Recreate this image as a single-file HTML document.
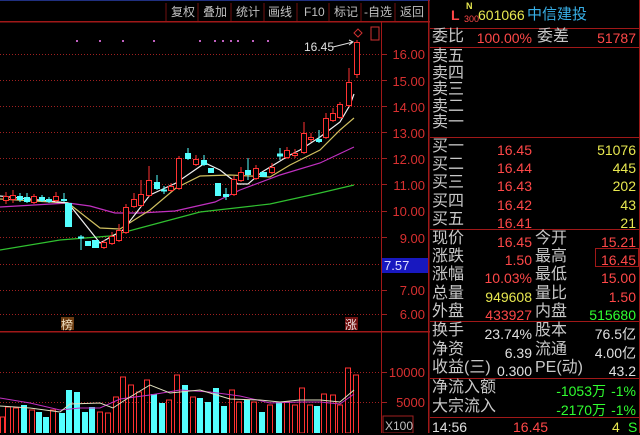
<!DOCTYPE html>
<html><head><meta charset="utf-8"><style>
body{margin:0;width:640px;height:433px;background:#000;overflow:hidden;position:relative;font-family:"Liberation Sans","Noto Sans CJK SC",sans-serif}
.t{position:absolute;white-space:nowrap;line-height:1}
.l{color:#c8c8c8;font-size:16px}
.r{color:#ff4848}.y{color:#e8e850}.g{color:#30ff30}.w{color:#e0e0e0}
.n{font-size:14px;text-align:right}
.hl{position:absolute;left:430px;width:210px;height:1px;background:#a01818}
</style></head><body>
<svg width="430" height="433" style="position:absolute;left:0;top:0" font-family="Liberation Sans, Noto Sans CJK SC, sans-serif">
<rect x="0" y="0" width="640" height="1" fill="#203080"/>
<g fill="#c0c0c0" font-size="12">
<text x="171" y="16">复权</text><text x="203" y="16">叠加</text><text x="236" y="16">统计</text><text x="268" y="16">画线</text><text x="304" y="16">F10</text><text x="334" y="16">标记</text><text x="364" y="16">-自选</text><text x="400" y="16">返回</text>
</g>
<g stroke="#701010"><path d="M166 3V21M198 3V21M231 3V21M264 3V21M297 3V21M329 3V21M361 3V21M395 3V21"/></g>
<rect x="0" y="21" width="430" height="1.5" fill="#a01818"/>
<g stroke="#a02020" stroke-dasharray="1,2">
<path d="M0 54.5H381M0 80.5H381M0 106.5H381M0 132.5H381M0 158.5H381M0 184.5H381M0 211.5H381M0 237.5H381M0 264.5H381M0 290.5H381M0 314.5H381M0 372.5H381M0 402.5H381"/>
</g>
<rect x="0" y="331" width="430" height="1.5" fill="#a01818"/>
<rect x="381" y="21" width="1" height="412" fill="#a01818"/>
<rect x="428" y="0" width="1.5" height="433" fill="#a01818"/>
<g stroke="#a02020"><path d="M382 54.5h5M382 80.5h5M382 106.5h5M382 132.5h5M382 158.5h5M382 184.5h5M382 211.5h5M382 237.5h5M382 290.5h5M382 314.5h5M382 372.5h5M382 402.5h5"/></g>
<g fill="#d83030" font-size="13" text-anchor="end">
<text x="425" y="59">16.00</text><text x="425" y="86">15.00</text><text x="425" y="112">14.00</text><text x="425" y="138">13.00</text><text x="425" y="164">12.00</text><text x="425" y="190">11.00</text><text x="425" y="216">10.00</text><text x="425" y="243">9.00</text><text x="425" y="295">7.00</text><text x="425" y="319">6.00</text>
<text x="425" y="377">10000</text><text x="425" y="407">5000</text>
</g>
<rect x="382" y="258" width="46" height="15" fill="#1818c0"/>
<text x="384" y="270" fill="#e0e0ff" font-size="13">7.57</text>
<rect x="383" y="416" width="30" height="17" fill="none" stroke="#a02020"/>
<text x="385" y="430" fill="#c0c0c0" font-size="12">X100</text>
<g fill="#c060c0"><rect x="76" y="40" width="2" height="2"/><rect x="99" y="40" width="2" height="2"/><rect x="122" y="40" width="2" height="2"/><rect x="153" y="40" width="2" height="2"/><rect x="199" y="40" width="2" height="2"/><rect x="214" y="40" width="2" height="2"/><rect x="222" y="40" width="2" height="2"/><rect x="230" y="40" width="2" height="2"/><rect x="237" y="40" width="2" height="2"/><rect x="252" y="40" width="2" height="2"/><rect x="267" y="40" width="2" height="2"/></g>
<path d="M358 29l4 4-4 4-4-4z" fill="none" stroke="#d03030"/>
<rect x="371" y="27" width="8" height="13" fill="none" stroke="#d03030"/>
<text x="304" y="51" fill="#e0e0e0" font-size="12">16.45</text>
<path d="M333 47L353 42M349 40l4 2-4 3" stroke="#e0e0e0" fill="none"/>
<g fill="none" stroke-width="1.2">
<polyline stroke="#30c030" points="0,250 60,240 110,236 140,228 200,212 270,204 320,193 354,185"/>
<polyline stroke="#c030c0" points="0,207 68,203 90,206 115,213 140,213 175,211 215,202 240,190 280,175 320,163 354,147"/>
<polyline stroke="#d0c060" points="0,199 68,203 100,228 120,229 150,210 176,188 200,176 230,175 270,177 290,165 320,150 340,130 354,118"/>
<polyline stroke="#f0f0f0" points="0,196 68,203 100,243 123,230 150,195 176,183 205,163 220,170 238,184 248,184 262,172 290,155 300,150 320,137 340,122 350,105 354,94"/>
</g>
<g stroke-width="1">
<g stroke="#ff3232" fill="#000">
<path d="M6 192V204M13 190V203M34 194V204M56 192V202M104 240V249M112 232V245M119 224V242M126 204V234M134 193V208M141 180V207M149 166V197M171 183V192M179 156V190M196 155V166M234 176V196M241 167V182M256 165V180M272 163V174M287 147V159M295 149V158M304 122V154M311 133V142M326 113V139M333 108V122M340 102V119M349 68V107M357 40V78" />
<rect x="3.5" y="196.5" width="5" height="4"/><rect x="10.5" y="195.5" width="5" height="4"/><rect x="31.5" y="196.5" width="5" height="6"/><rect x="53.5" y="196.5" width="5" height="4"/>
<rect x="101.5" y="242.5" width="5" height="5"/><rect x="109.5" y="236.5" width="5" height="7"/><rect x="116.5" y="230.5" width="5" height="10"/><rect x="123.5" y="207.5" width="5" height="25"/><rect x="131.5" y="199.5" width="5" height="7"/><rect x="138.5" y="194.5" width="5" height="11"/><rect x="146.5" y="180.5" width="5" height="15"/><rect x="168.5" y="186.5" width="5" height="4"/><rect x="176.5" y="158.5" width="5" height="30"/><rect x="193.5" y="159.5" width="5" height="5"/><rect x="231.5" y="179.5" width="5" height="15"/><rect x="238.5" y="172.5" width="5" height="8"/><rect x="253.5" y="168.5" width="5" height="10"/><rect x="269.5" y="167.5" width="5" height="5"/><rect x="284.5" y="150.5" width="5" height="7"/><rect x="292.5" y="153.5" width="5" height="2"/><rect x="301.5" y="133.5" width="5" height="19"/><rect x="308.5" y="137.5" width="5" height="2"/><rect x="323.5" y="118.5" width="5" height="19"/><rect x="330.5" y="113.5" width="5" height="7"/><rect x="337.5" y="104.5" width="5" height="13"/><rect x="346.5" y="82.5" width="5" height="23"/><rect x="354.5" y="42.5" width="5" height="32"/>
</g>
<g stroke="#54ffff" fill="#54ffff">
<path d="M20 193V202M27 193V203M42 195V202M49 197V203M64 193V202M81 235V250M157 175V190M164 186V194M188 148V160M204 155V166M226 188V200M248 158V180M280 148V160M319 130V143"/>
<rect x="17.5" y="196.5" width="5" height="3"/><rect x="24.5" y="197.5" width="5" height="4"/><rect x="39.5" y="197.5" width="5" height="3"/><rect x="46.5" y="199.5" width="5" height="2"/><rect x="61.5" y="199.5" width="5" height="1"/>
<rect x="65.5" y="203.5" width="6" height="23"/><rect x="78.5" y="237" width="5" height="1"/><rect x="85.5" y="241.5" width="5" height="4"/><rect x="92.5" y="240.5" width="6" height="7"/><rect x="154.5" y="182.5" width="5" height="6"/><rect x="161.5" y="190" width="5" height="1"/><rect x="185.5" y="153.5" width="5" height="5"/><rect x="201.5" y="160.5" width="5" height="4"/><rect x="208.5" y="168.5" width="5" height="4"/><rect x="215.5" y="183.5" width="5" height="12"/><rect x="223.5" y="194.5" width="5" height="2"/><rect x="245.5" y="170.5" width="5" height="4"/><rect x="260.5" y="172.5" width="6" height="4"/><rect x="277.5" y="154" width="5" height="2"/><rect x="316.5" y="139.5" width="5" height="2"/>
</g>
</g>
<rect x="61" y="317" width="13" height="13" fill="#6a3a10"/><text x="61" y="329" fill="#f0e0c0" font-size="12">榜</text>
<rect x="345" y="317" width="13" height="13" fill="#701010"/><text x="345" y="329" fill="#f0e0e0" font-size="12">涨</text>
<g stroke="#ff3232" fill="none">
<rect x="0.5" y="417" width="4" height="20"/><rect x="5.5" y="407" width="5" height="30"/><rect x="13.5" y="408" width="5" height="30"/><rect x="29.5" y="410" width="5" height="30"/><rect x="50.5" y="410" width="5" height="30"/><rect x="97.5" y="412" width="5" height="30"/><rect x="105.5" y="413" width="5" height="30"/><rect x="113.5" y="397" width="5" height="40"/><rect x="120.5" y="377" width="5" height="60"/><rect x="128.5" y="385" width="5" height="50"/><rect x="136.5" y="392" width="5" height="45"/><rect x="144.5" y="380" width="5" height="55"/><rect x="166.5" y="400" width="5" height="35"/><rect x="174.5" y="375" width="5" height="60"/><rect x="190.5" y="397" width="5" height="40"/><rect x="229.5" y="390" width="5" height="45"/><rect x="236.5" y="402" width="5" height="35"/><rect x="251.5" y="402" width="5" height="35"/><rect x="267.5" y="405" width="5" height="30"/><rect x="284.5" y="402" width="5" height="35"/><rect x="292.5" y="405" width="5" height="30"/><rect x="299.5" y="388" width="5" height="45"/><rect x="307.5" y="405" width="5" height="30"/><rect x="321.5" y="394" width="5" height="40"/><rect x="330.5" y="395" width="5" height="40"/><rect x="337.5" y="405" width="5" height="30"/><rect x="345.5" y="368" width="5" height="65"/><rect x="353.5" y="375" width="5" height="60"/>
</g>
<g fill="#54ffff">
<rect x="21" y="405" width="6" height="30"/><rect x="36" y="412" width="6" height="25"/><rect x="43" y="417" width="6" height="20"/><rect x="59" y="413" width="6" height="25"/><rect x="66" y="390" width="6" height="45"/><rect x="74" y="392" width="6" height="45"/><rect x="82" y="412" width="6" height="25"/><rect x="89" y="407" width="6" height="30"/><rect x="151" y="394" width="6" height="40"/><rect x="159" y="403" width="6" height="35"/><rect x="182" y="385" width="6" height="50"/><rect x="197" y="398" width="6" height="40"/><rect x="205" y="402" width="6" height="35"/><rect x="213" y="388" width="6" height="45"/><rect x="221" y="406" width="6" height="30"/><rect x="244" y="400" width="6" height="35"/><rect x="259" y="412" width="6" height="25"/><rect x="276" y="402" width="6" height="35"/><rect x="314" y="406" width="6" height="30"/>
</g>
<g fill="none" stroke-width="1">
<polyline stroke="#c030c0" points="0,398 30,403 60,410 80,408 100,408 120,399 150,395 180,390 210,392 240,396 270,403 300,402 320,402 340,404 354,394"/>
<polyline stroke="#e0e0c0" points="0,406 30,408 60,412 70,404 100,403 113,408 125,400 150,385 170,393 200,390 230,399 260,400 280,402 300,400 320,400 340,402 354,390"/>
</g>
</svg>
<div style="position:absolute;left:639px;top:0;width:1px;height:433px;background:#a01818"></div>
<div class="hl" style="top:28px"></div><div class="hl" style="top:47px"></div><div class="hl" style="top:137px"></div><div class="hl" style="top:229px"></div><div class="hl" style="top:321px"></div><div class="hl" style="top:378px"></div><div class="hl" style="top:417px"></div>
<div class="t r" style="left:451px;top:8px;font-size:14px;font-weight:bold">L</div>
<div class="t y" style="left:466px;top:2px;font-size:9px;font-weight:bold">N</div>
<div class="t r" style="left:464px;top:15px;font-size:9px">300</div>
<div class="t y" style="left:478px;top:8px;font-size:14px">601066</div>
<div class="t" style="left:527px;top:7px;font-size:15px;color:#38b0e8">中信建投</div>
<div class="t l" style="left:432px;top:29px">委比</div>
<div class="t r n" style="left:470px;top:31px;width:62px">100.00%</div>
<div class="t l" style="left:537px;top:29px">委差</div>
<div class="t r n" style="left:580px;top:31px;width:56px">51787</div>
<div class="t l" style="left:432px;top:49px;line-height:16.5px">卖五<br>卖四<br>卖三<br>卖二<br>卖一</div>
<div class="t l" style="left:432px;top:138px;line-height:18.2px">买一<br>买二<br>买三<br>买四<br>买五</div>
<div class="t r n" style="left:480px;top:141px;width:52px;line-height:18.2px">16.45<br>16.44<br>16.43<br>16.42<br>16.41</div>
<div class="t y n" style="left:570px;top:141px;width:66px;line-height:18.2px">51076<br>445<br>202<br>43<br>21</div>
<div class="t l" style="left:432px;top:230px;line-height:18.2px">现价<br>涨跌<br>涨幅<br>总量<br>外盘</div>
<div class="t n" style="left:460px;top:233px;width:72px;line-height:18.2px"><span class="r">16.45</span><br><span class="r">1.50</span><br><span class="r">10.03%</span><br><span class="y">949608</span><br><span class="r">433927</span></div>
<div class="t l" style="left:535px;top:230px;line-height:18.2px">今开<br>最高<br>最低<br>量比<br>内盘</div>
<div class="t n" style="left:570px;top:233px;width:66px;line-height:18.2px"><span class="r">15.21</span><br><span class="r">16.45</span><br><span class="r">15.00</span><br><span class="r">1.50</span><br><span class="g">515680</span></div>
<div style="position:absolute;left:595px;top:248px;width:42px;height:17px;border:1px solid #a01818"></div>
<div class="t l" style="left:432px;top:322px;line-height:18.5px">换手<br>净资<br>收益(三)</div>
<div class="t w n" style="left:460px;top:325px;width:72px;line-height:18.5px">23.74%<br>6.39<br>0.300</div>
<div class="t l" style="left:535px;top:322px;line-height:18.5px">股本<br>流通<br>PE(动)</div>
<div class="t w n" style="left:570px;top:325px;width:66px;line-height:18.5px">76.5亿<br>4.00亿<br>43.2</div>
<div class="t l" style="left:432px;top:379px;line-height:18.5px">净流入额<br>大宗流入</div>
<div class="t g n" style="left:520px;top:382px;width:86px;line-height:18.5px">-1053万<br>-2170万</div>
<div class="t g n" style="left:600px;top:382px;width:36px;line-height:18.5px">-1%<br>-1%</div>
<div class="t w" style="left:432px;top:420px;font-size:14px">14:56</div>
<div class="t r" style="left:513px;top:420px;font-size:14px">16.45</div>
<div class="t y" style="left:612px;top:420px;font-size:14px">4</div>
<div class="t g" style="left:628px;top:420px;font-size:14px">S</div>
</body></html>
